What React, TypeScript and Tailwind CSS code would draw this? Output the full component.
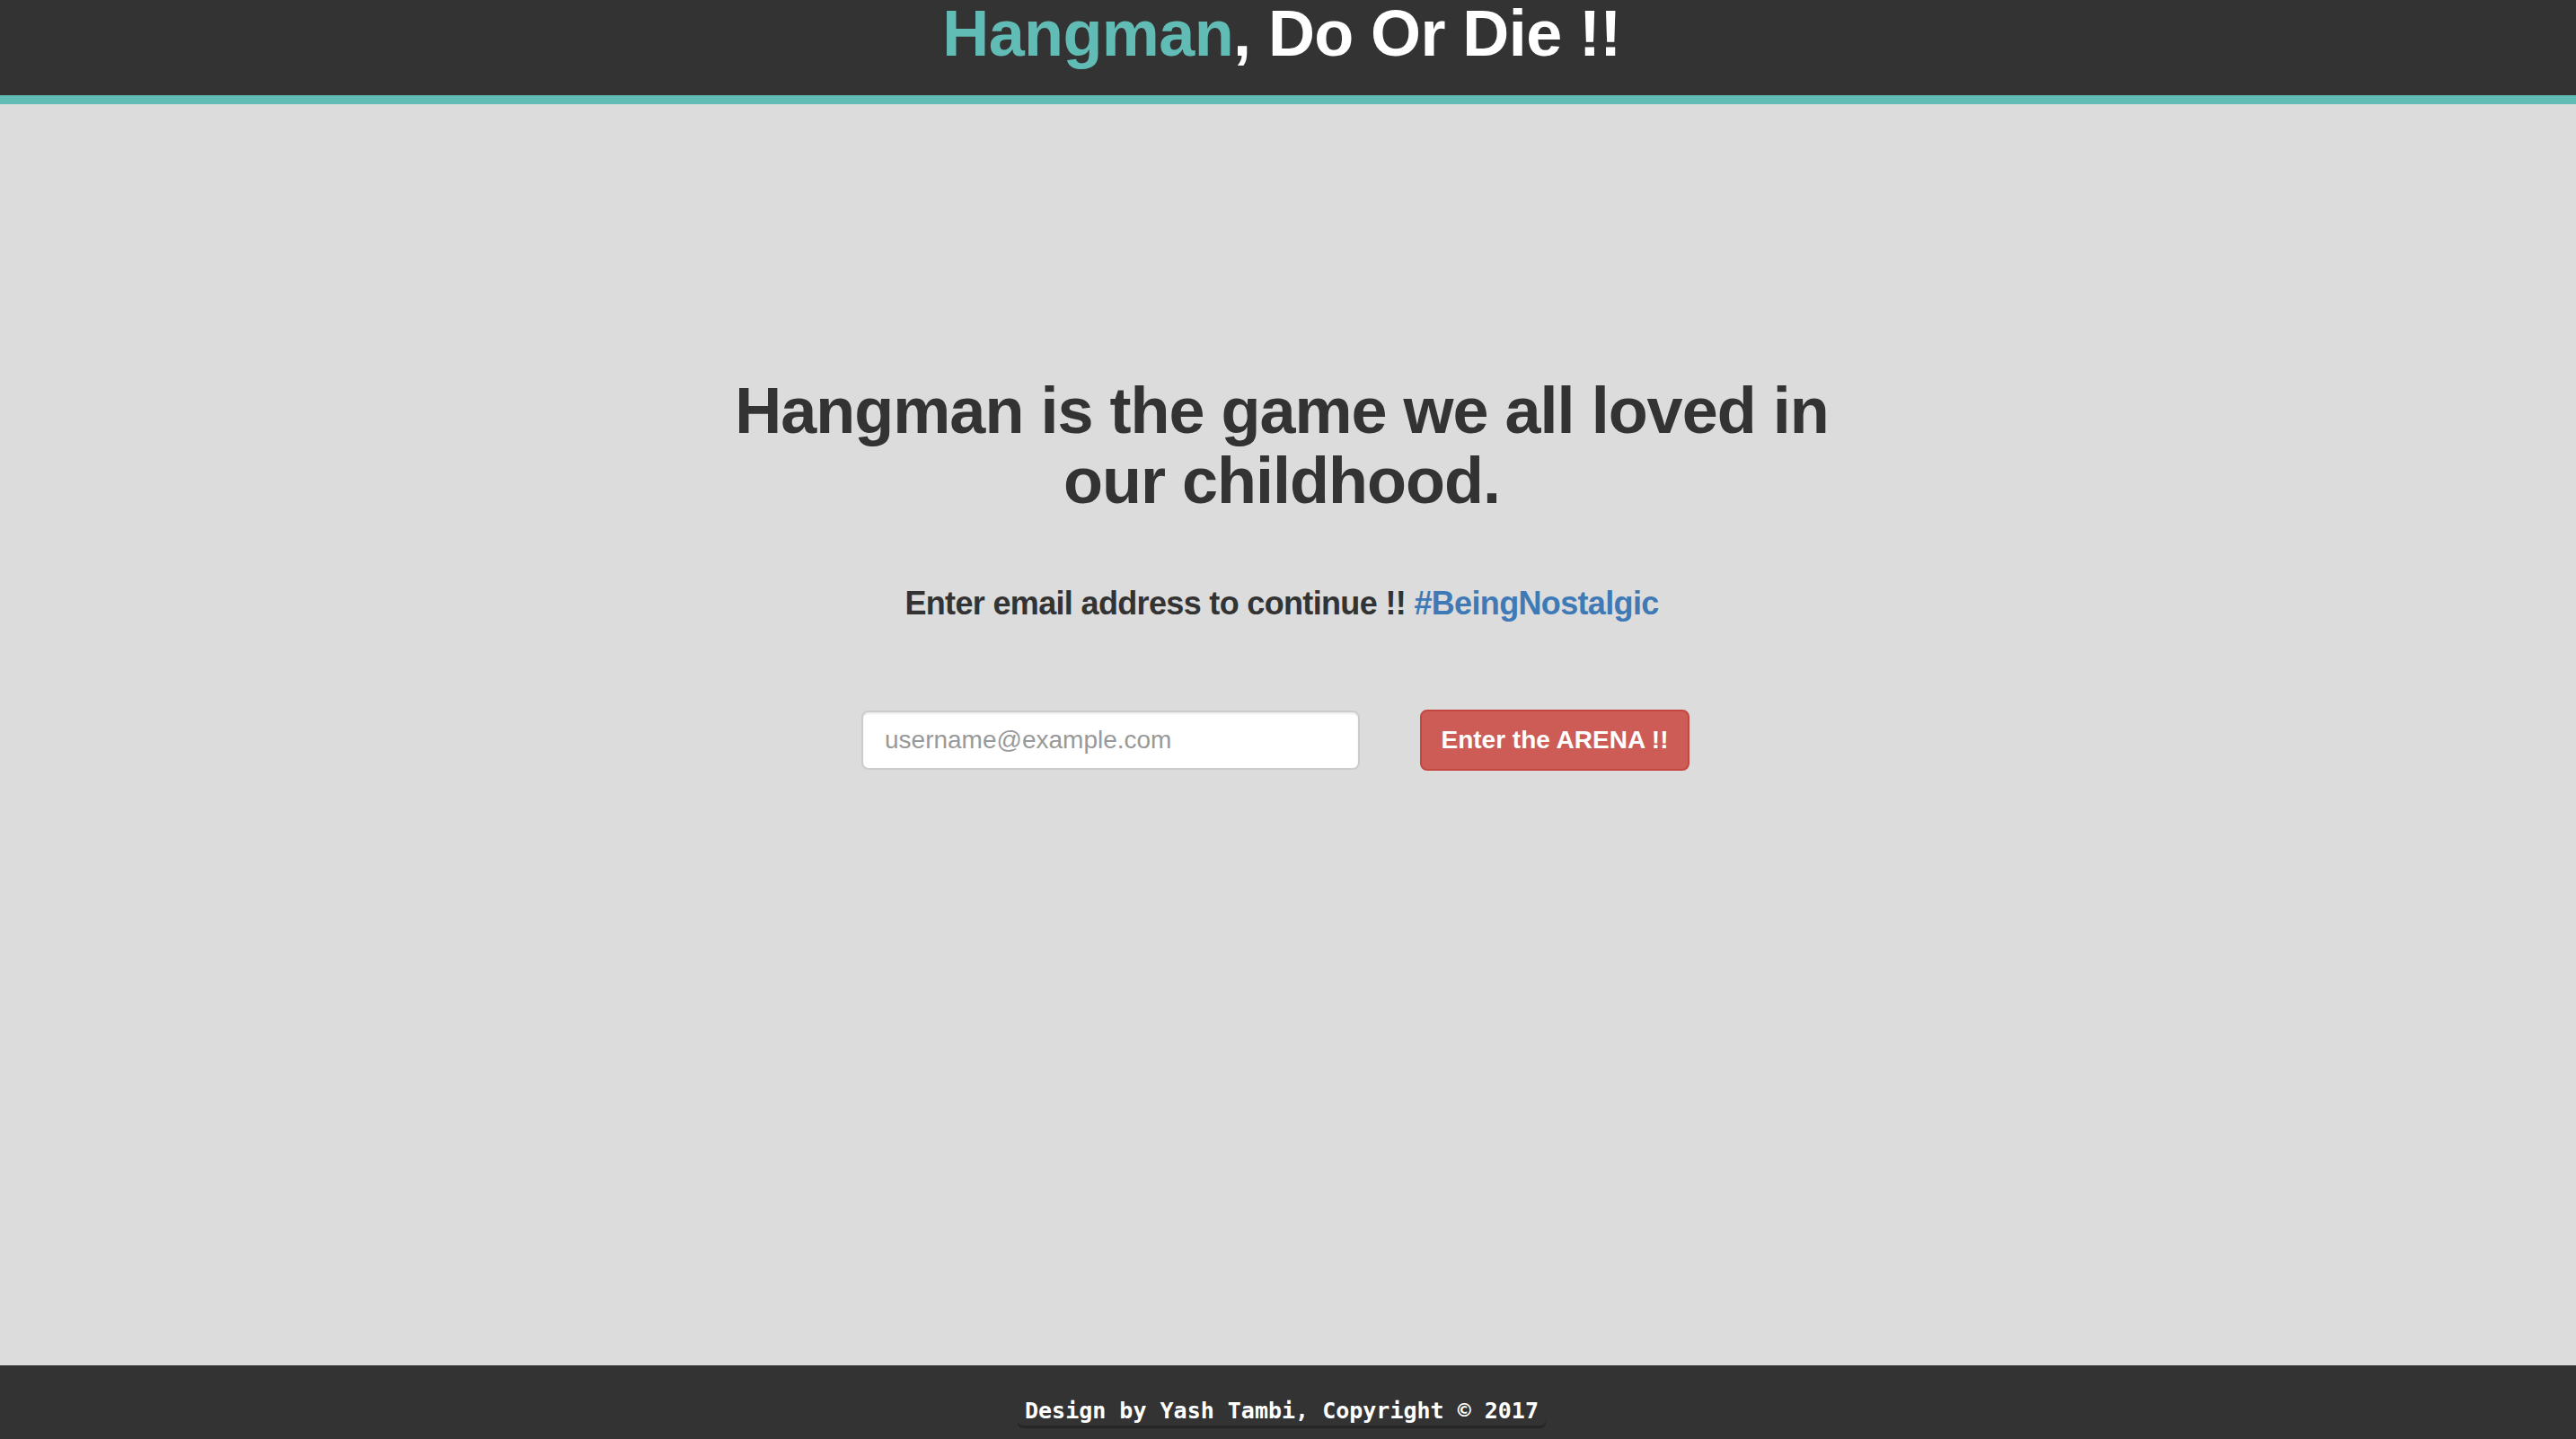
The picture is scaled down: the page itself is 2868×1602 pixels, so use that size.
import React from "react";

export default function App() {
  return (
    <div
      className="flex h-screen w-full flex-col bg-[#dcdcdc]"
      style={{ fontFamily: '"Liberation Sans", Arial, sans-serif' }}
    >
      <header className="h-[116px] shrink-0 border-b-[10px] border-[#62bcb6] bg-[#333333] pr-[14px] pt-[1px] text-center">
        <h1 className="text-[72px] font-bold leading-[72px] tracking-[-0.6px] text-white">
          <span className="text-[#62bcb6]">Hangman</span>, Do Or Die !!
        </h1>
      </header>

      <main className="flex flex-1 flex-col items-center pr-[14px] pt-[302px]">
        <h2 className="w-[1300px] text-center text-[72px] font-bold leading-[78px] tracking-[-1px] text-[#333333]">
          Hangman is the game we all loved in
          <br />
          our childhood.
        </h2>
        <p className="mt-[78px] text-center text-[36px] font-bold leading-[40px] tracking-[-0.66px] text-[#333333]">
          Enter email address to continue !!{" "}
          <a className="text-[#3f7ab6]" href="#">
            #BeingNostalgic
          </a>
        </p>
        <div className="mt-[98px] flex items-center gap-[67px] pr-[14px]">
          <input
            type="email"
            placeholder="username@example.com"
            className="h-[66px] w-[555px] rounded-[8px] border-2 border-[#cccccc] bg-white px-[24px] text-[28px] text-[#555] shadow-[inset_0_2px_2px_rgba(0,0,0,0.075)] outline-none placeholder:text-[#999999]"
            style={{ fontFamily: '"Liberation Sans", Arial, sans-serif' }}
          />
          <button
            className="h-[68px] w-[300px] rounded-[8px] border-2 border-[#c4483f] bg-[#cc5c55] text-[28px] font-bold text-white"
            style={{ fontFamily: '"Liberation Sans", Arial, sans-serif' }}
          >
            Enter the ARENA !!
          </button>
        </div>
      </main>

      <footer className="h-[82px] shrink-0 bg-[#333333] pr-[14px] pt-[32px] text-center">
        <kbd
          className="inline-block rounded-[6px] bg-[#333333] px-[8px] py-[4px] text-[25px] font-bold leading-[30px] text-white shadow-[inset_0_-3px_0_rgba(0,0,0,0.25)]"
          style={{ fontFamily: '"DejaVu Sans Mono", monospace' }}
        >
          Design by Yash Tambi, Copyright © 2017
        </kbd>
      </footer>
    </div>
  );
}
